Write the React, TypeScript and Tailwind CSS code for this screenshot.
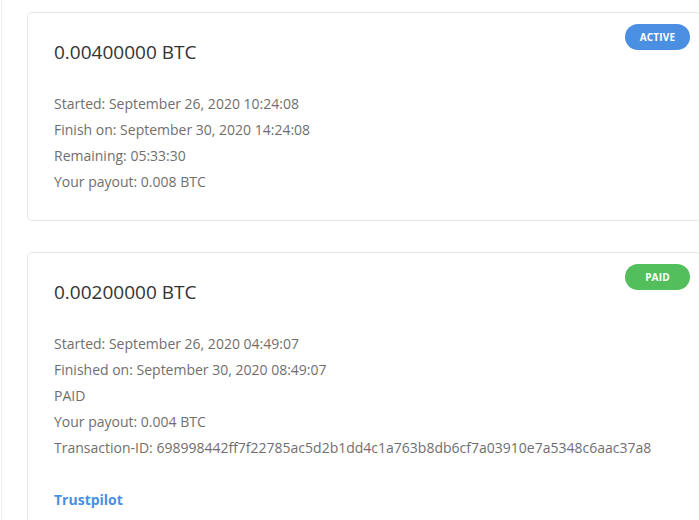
import React from "react";

const font = { fontFamily: '"Open Sans", "Liberation Sans", sans-serif' };

function Badge({ label, color }: { label: string; color: string }) {
  return (
    <span
      className={`absolute right-[11px] top-[11px] flex h-[26px] w-[65px] items-center justify-center rounded-full text-[10px] font-bold uppercase tracking-[0.2px] text-white ${color}`}
    >
      {label}
    </span>
  );
}

function Line({ children }: { children: React.ReactNode }) {
  return <div className="text-[14px] leading-[26px] text-[#6f6f6f] whitespace-nowrap">{children}</div>;
}

export default function App() {
  return (
    <div className="h-[520px] w-[699px] overflow-hidden bg-white" style={font}>
      <div className="ml-px h-full border-l border-[#ececec] pl-[25px] pt-[12px]">
        <div className="relative w-[675px] rounded-[5px] border border-[#e6e6e6] bg-white px-[26px] pt-[25px] pb-[25px]">
          <Badge label="Active" color="bg-[#4a8fe2]" />
          <div className="text-[19px] leading-[28px] text-[#333333]">0.00400000 BTC</div>
          <div className="mt-[25px]">
            <Line>Started: September 26, 2020 10:24:08</Line>
            <Line>Finish on: September 30, 2020 14:24:08</Line>
            <Line>Remaining: 05:33:30</Line>
            <Line>Your payout: 0.008 BTC</Line>
          </div>
        </div>
        <div className="relative mt-[31px] w-[675px] rounded-[5px] border border-[#e6e6e6] bg-white px-[26px] pt-[25px] pb-[25px]">
          <Badge label="Paid" color="bg-[#53be5c]" />
          <div className="text-[19px] leading-[28px] text-[#333333]">0.00200000 BTC</div>
          <div className="mt-[25px]">
            <Line>Started: September 26, 2020 04:49:07</Line>
            <Line>Finished on: September 30, 2020 08:49:07</Line>
            <Line>PAID</Line>
            <Line>Your payout: 0.004 BTC</Line>
            <Line>Transaction-ID: 698998442ff7f22785ac5d2b1dd4c1a763b8db6cf7a03910e7a5348c6aac37a8</Line>
          </div>
          <div className="mt-[26px] text-[14px] font-bold leading-[26px] text-[#4a8fe2]">
            <a href="#">Trustpilot</a>
          </div>
        </div>
      </div>
    </div>
  );
}
